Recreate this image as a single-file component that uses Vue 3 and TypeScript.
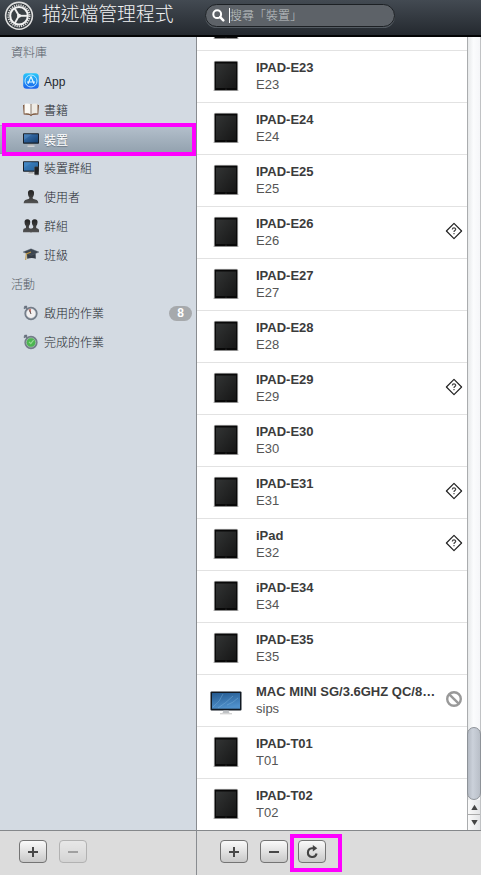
<script setup lang="ts">
interface NavItem {
  label: string
  icon: string
  latin?: boolean
  active?: boolean
  count?: number
}
interface Device {
  name: string
  detail: string
  kind?: 'mac'
  status?: 'unknown' | 'blocked'
}

const sections: { title: string; items: NavItem[] }[] = [
  {
    title: '資料庫',
    items: [
      { label: 'App', icon: 'app', latin: true },
      { label: '書籍', icon: 'book' },
      { label: '裝置', icon: 'device', active: true },
      { label: '裝置群組', icon: 'devices' },
      { label: '使用者', icon: 'user' },
      { label: '群組', icon: 'group' },
      { label: '班級', icon: 'class' },
    ],
  },
  {
    title: '活動',
    items: [
      { label: '啟用的作業', icon: 'active', count: 8 },
      { label: '完成的作業', icon: 'done' },
    ],
  },
]

const devices: Device[] = [
  { name: '', detail: '' },
  { name: 'IPAD-E23', detail: 'E23' },
  { name: 'IPAD-E24', detail: 'E24' },
  { name: 'IPAD-E25', detail: 'E25' },
  { name: 'IPAD-E26', detail: 'E26', status: 'unknown' },
  { name: 'IPAD-E27', detail: 'E27' },
  { name: 'IPAD-E28', detail: 'E28' },
  { name: 'IPAD-E29', detail: 'E29', status: 'unknown' },
  { name: 'IPAD-E30', detail: 'E30' },
  { name: 'IPAD-E31', detail: 'E31', status: 'unknown' },
  { name: 'iPad', detail: 'E32', status: 'unknown' },
  { name: 'iPAD-E34', detail: 'E34' },
  { name: 'IPAD-E35', detail: 'E35' },
  { name: 'MAC MINI SG/3.6GHZ QC/8…', detail: 'sips', kind: 'mac', status: 'blocked' },
  { name: 'IPAD-T01', detail: 'T01' },
  { name: 'IPAD-T02', detail: 'T02' },
]

const spokes = [60, 180, 300]
</script>

<template>
  <div class="window">
    <svg class="defs" width="0" height="0" aria-hidden="true">
      <defs>
        <linearGradient id="blue" x1="0" y1="0" x2="0" y2="1">
          <stop offset="0" stop-color="#28c8fa" /><stop offset="1" stop-color="#1a62ee" />
        </linearGradient>
        <linearGradient id="screen" x1="0" y1="0" x2="0.3" y2="1">
          <stop offset="0" stop-color="#23598f" /><stop offset="1" stop-color="#4f90cb" />
        </linearGradient>
        <linearGradient id="screen-dark" x1="0" y1="0" x2="1" y2="1">
          <stop offset="0" stop-color="#3f79b8" /><stop offset="1" stop-color="#153f70" />
        </linearGradient>
        <linearGradient id="glass" x1="0" y1="0" x2="1" y2="1">
          <stop offset="0" stop-color="#323434" /><stop offset="0.5" stop-color="#242525" /><stop offset="1" stop-color="#161616" />
        </linearGradient>
        <linearGradient id="person" x1="0" y1="0" x2="0" y2="1">
          <stop offset="0" stop-color="#222" /><stop offset="1" stop-color="#535353" />
        </linearGradient>
      </defs>
    </svg>

    <header class="topbar">
      <svg class="logo" width="30" height="32" viewBox="0 0 30 32">
        <circle cx="15" cy="15.8" r="13.4" fill="#30363b" stroke="#dedede" stroke-width="1.6" />
        <circle cx="15" cy="15.8" r="10.6" fill="none" stroke="#d8d8d8" stroke-width="2" stroke-dasharray="1.3 0.92" />
        <circle cx="15" cy="15.8" r="8.8" fill="#3a4045" stroke="#f2f2f2" stroke-width="2" />
        <g stroke="#eee" stroke-width="1.9">
          <line v-for="a in spokes" :key="a" x1="15" y1="15.8" x2="6.5" y2="15.8" :transform="`rotate(${a} 15 15.8)`" />
        </g>
        <circle cx="15" cy="15.8" r="2" fill="#f2f2f2" />
      </svg>
      <h1>描述檔管理程式</h1>
      <div class="search">
        <svg width="13" height="13" viewBox="0 0 13 13">
          <circle cx="5.2" cy="5.2" r="3.9" fill="none" stroke="#fff" stroke-width="2" />
          <path d="M8.2 8.2L11.3 11.3" stroke="#fff" stroke-width="2.5" stroke-linecap="round" />
        </svg>
        <i class="caret"></i>
        <span>搜尋「裝置」</span>
      </div>
    </header>

    <div class="body">
      <aside class="sidebar">
        <nav>
          <template v-for="section in sections" :key="section.title">
            <h2>{{ section.title }}</h2>
            <div v-for="item in section.items" :key="item.label" class="nav-item" :class="{ active: item.active }">
              <svg width="16" height="16" viewBox="0 0 16 16">
                <template v-if="item.icon === 'app'">
                  <rect x="0.2" y="0.2" width="15.6" height="15.6" rx="3.6" fill="url(#blue)" />
                  <circle cx="8" cy="8" r="6" fill="none" stroke="#b8e5ff" stroke-width="1" />
                  <path d="M8 3.6L5 10.8M8 3.6L11 10.8M4 9H12" fill="none" stroke="#e4f6ff" stroke-width="1.2" />
                </template>
                <template v-else-if="item.icon === 'book'">
                  <path d="M0 3H1.5V2H14.5V3H16L15.3 12.6L9.5 13L8 14.2L6.5 13L.7 12.6Z" fill="#7d573d" />
                  <path d="M1.5 1.7Q5.5 .8 8 2.6V12.4Q5 10.7 1.5 11.5Z" fill="#fbf9f5" />
                  <path d="M14.5 1.7Q10.5 .8 8 2.6V12.4Q11 10.7 14.5 11.5Z" fill="#eeebe5" />
                  <path d="M8 2.5V12.4" stroke="#87786d" stroke-width="1" />
                </template>
                <template v-else-if="item.icon === 'device' || item.icon === 'devices'">
                  <rect x="0" y="1.3" width="16" height="10.5" rx="0.8" fill="#18202a" />
                  <rect x="1" y="2.3" width="14" height="8.2" fill="url(#screen-dark)" />
                  <path d="M1 2.3H9L1 8Z" fill="#659ccb" opacity="0.35" />
                  <path d="M6 12H10L11 13.7H5Z" fill="#aaa" />
                  <path d="M4.5 14.2H11.5" stroke="#e5e5e5" stroke-width="1" />
                  <g v-if="item.icon === 'devices'">
                    <path d="M1 2.3H15V10.5H1Z" fill="#3e91d3" opacity="0.45" />
                    <rect x="11.5" y="6.8" width="4.3" height="8" rx="0.7" fill="#202225" stroke="#555" stroke-width="0.5" />
                  </g>
                </template>
                <template v-else-if="item.icon === 'user'">
                  <path d="M8 1C5.5 1 4.7 2.6 5 4.8C5.1 6.5 5.6 7.7 6.4 8.5L6.1 9.8L2.2 11Q.8 11.7 .6 14.2H15.4Q15.2 11.7 13.8 11L9.9 9.8L9.6 8.5C10.4 7.6 10.9 6.4 11 4.8C11.3 2.6 10.5 1 8 1Z" fill="url(#person)" />
                </template>
                <template v-else-if="item.icon === 'group'">
                  <path d="M11.7 1.3C9.4 1.3 8.6 2.8 8.9 4.7C9 6.3 9.6 7.2 10.3 8L10 10L7 11V14.2H16V11.7Q15.5 10.5 13.2 10V8Q14.3 7 14.5 4.7C14.8 2.8 14 1.3 11.7 1.3Z" fill="url(#person)" />
                  <path d="M4.4 1.3C2.1 1.3 1.3 2.8 1.6 4.7C1.7 6.4 2.3 7.3 3 8L2.9 10L.7 10.8Q0 11.5 0 14.2H9Q8.8 11.4 7.8 10.8L5.9 10V8Q7 7 7.2 4.7C7.5 2.8 6.7 1.3 4.4 1.3Z" fill="url(#person)" />
                </template>
                <template v-else-if="item.icon === 'class'">
                  <path d="M4 6L12.6 6L12.8 11.8Q9 10 4.2 11.8Z" fill="#353c46" />
                  <path d="M0 5.1L8 1.8L16 5.1L8.3 8.3Z" fill="#3d4651" stroke="#626c77" stroke-width="0.4" />
                  <path d="M8 5L3.3 7L2.7 13" fill="none" stroke="#bd9643" stroke-width="1.1" />
                </template>
                <template v-else>
                  <path d="M1.5 1.2L4.5 3.8M1 3.6L3.8 1" stroke="#68717e" stroke-width="1.7" />
                  <circle cx="8" cy="8.5" r="5.7" :fill="item.icon === 'done' ? '#4cb550' : '#f2f0f0'" stroke="#737c88" stroke-width="1.9" />
                  <circle cx="8" cy="8.5" r="4.7" fill="none" stroke="#c8ced5" stroke-width="0.5" />
                  <path v-if="item.icon === 'done'" d="M6 7.8L7.8 9.6L10.6 6" fill="none" stroke="#96dd92" stroke-width="1.2" />
                  <template v-else>
                    <path d="M8 8.5L5.3 4.5Q6.5 3.6 8 3.7Z" fill="#c87e76" />
                    <path d="M8 9L6.5 5.5" stroke="#634f4d" stroke-width="1" />
                  </template>
                </template>
              </svg>
              <span class="label" :class="{ latin: item.latin }">{{ item.label }}</span>
              <b v-if="item.count" class="badge">{{ item.count }}</b>
            </div>
          </template>
          <div class="nav-mark"></div>
        </nav>
        <footer class="toolbar">
          <button aria-label="+"><svg width="12" height="12" viewBox="0 0 12 12"><path d="M6 1V11M1 6H11" stroke="#484848" stroke-width="2" /></svg></button>
          <button disabled aria-label="−"><svg width="12" height="12" viewBox="0 0 12 12"><path d="M1 6H11" stroke="#484848" stroke-width="2" /></svg></button>
        </footer>
      </aside>

      <main class="panel">
        <div class="scroll-area">
          <div class="list">
            <div v-for="(device, i) in devices" :key="i" class="row">
              <div class="thumb">
                <svg v-if="device.kind === 'mac'" class="mac" width="32" height="26" viewBox="0 0 32 26">
                  <rect x="0.5" y="0.5" width="31" height="19" rx="1" fill="#111922" />
                  <rect x="2" y="2" width="28" height="15.7" fill="url(#screen)" />
                  <path d="M3 16Q10 11 13 3M8 17Q16 12 23 5M17 14Q23 12 28 7" fill="none" stroke="#8fc0e5" stroke-width="0.8" opacity="0.45" />
                  <path d="M13.5 19.5H18.5L19.5 22H12.5Z" fill="#bfc2c5" />
                  <path d="M10 22.7H22" stroke="#d2d2d2" stroke-width="1.3" />
                </svg>
                <svg v-else width="26" height="32" viewBox="0 0 26 32">
                  <path d="M0.5 30.3H25.5" stroke="#aaa" stroke-width="1" />
                  <rect x="1.3" y="1.3" width="23.4" height="29.2" rx="1.3" fill="#090909" stroke="#aaa" stroke-width="0.6" />
                  <rect x="3" y="3.5" width="20" height="24.5" fill="url(#glass)" />
                  <circle cx="13" cy="29.2" r="0.6" fill="#333" />
                </svg>
              </div>
              <div class="text">
                <strong>{{ device.name }}</strong>
                <span>{{ device.detail }}</span>
              </div>
              <div class="status">
                <svg v-if="device.status === 'unknown'" width="18" height="18" viewBox="0 0 18 18">
                  <path d="M9 1.4L16.6 9L9 16.6L1.4 9Z" fill="#fff" stroke="#222" stroke-width="1.2" stroke-linejoin="round" />
                  <path d="M7.3 7.4C7.3 5.5 10.7 5.5 10.7 7.3C10.7 8.6 9 8.5 9 9.9M9 11V12.2" fill="none" stroke="#444" stroke-width="1.2" />
                </svg>
                <svg v-else-if="device.status === 'blocked'" width="18" height="18" viewBox="0 0 18 18">
                  <circle cx="9" cy="9" r="6.8" fill="none" stroke="#999" stroke-width="2.4" />
                  <path d="M4.3 4.3L13.7 13.7" stroke="#999" stroke-width="2.4" />
                </svg>
              </div>
            </div>
          </div>
          <div class="scrollbar">
            <div class="thumb-bar"></div>
            <div class="arrow"><svg width="7" height="7" viewBox="0 0 7 7"><path d="M3.5 0.8L6.7 6H0.3Z" fill="#444" /></svg></div>
            <div class="arrow"><svg width="7" height="7" viewBox="0 0 7 7"><path d="M3.5 6.2L6.7 1H0.3Z" fill="#444" /></svg></div>
          </div>
        </div>
        <footer class="toolbar">
          <button aria-label="+"><svg width="12" height="12" viewBox="0 0 12 12"><path d="M6 1V11M1 6H11" stroke="#484848" stroke-width="2" /></svg></button>
          <button aria-label="−"><svg width="12" height="12" viewBox="0 0 12 12"><path d="M1 6H11" stroke="#484848" stroke-width="2" /></svg></button>
          <button class="refresh" aria-label="↻">
            <svg width="14" height="14" viewBox="0 0 14 14">
              <path d="M8.5 3.2H7A4.4 4.4 0 1 0 11.6 8.6" fill="none" stroke="#444" stroke-width="2.1" />
              <path d="M7.8 0L12.3 3.3L7.8 6.4Z" fill="#444" />
            </svg>
            <i class="refresh-mark"></i>
          </button>
        </footer>
      </main>
    </div>
  </div>
</template>

<style>
body {
  margin: 0;
  overflow: hidden;
}
</style>

<style scoped>
* {
  box-sizing: border-box;
}
.window {
  display: flex;
  flex-direction: column;
  width: 481px;
  height: 875px;
  font-family: "Liberation Sans", "Noto Sans CJK TC", sans-serif;
  background: #fff;
}
.defs {
  position: absolute;
}
svg {
  display: block;
  flex: none;
}
.topbar {
  display: flex;
  align-items: flex-start;
  height: 37px;
  flex: none;
  padding-left: 4px;
  background: linear-gradient(#434a52, #24292f);
  border-bottom: 2px solid #030405;
}
h1 {
  width: 163px;
  margin: 0 0 0 8px;
  font-size: 18.8px;
  line-height: 30px;
  font-weight: 300;
  color: #f2f3f4;
  white-space: nowrap;
}
.search {
  display: flex;
  align-items: center;
  width: 190px;
  height: 23px;
  margin-top: 4px;
  padding-left: 6px;
  border: 1px solid #1c2024;
  border-radius: 12px;
  background: #5d6268;
  box-shadow: 0 1px 0 #535a61;
  font-size: 12px;
  font-weight: 300;
  color: #bfc2c5;
}
.caret {
  width: 1px;
  height: 15px;
  margin-left: 4px;
  background: #fff;
}
.search span {
  line-height: 20px;
  white-space: nowrap;
}
.body {
  display: flex;
  flex: 1;
  min-height: 0;
}
.sidebar {
  display: flex;
  flex-direction: column;
  width: 197px;
  flex: none;
  border-right: 1px solid #898c90;
}
nav {
  position: relative;
  flex: 1;
  padding-top: 1px;
  background: #d3dae2;
}
h2 {
  height: 29px;
  margin: 0;
  padding-left: 11px;
  font-size: 12px;
  line-height: 30px;
  font-weight: 300;
  color: #555c66;
}
.nav-item {
  display: flex;
  align-items: center;
  height: 29px;
  padding: 0 4px 1px 23px;
  font-size: 12px;
  color: #24282e;
}
.label {
  flex: 1;
  margin-left: 5px;
  padding-top: 2px;
  font-weight: 300;
  line-height: 28px;
}
.label.latin {
  padding-top: 1px;
}
.nav-item.active {
  padding-bottom: 0;
  color: #fff;
  background: linear-gradient(#b4c0cc, #92a1ae);
  border-top: 1px solid #a0abb7;
  border-bottom: 1px solid #8695a2;
}
.active .label {
  font-weight: 400;
  text-shadow: 0 1px 1px #68737e;
}
.badge {
  width: 23px;
  height: 15px;
  border-radius: 8px;
  background: #a6a9ac;
  color: #fff;
  font-size: 12px;
  line-height: 14px;
  text-align: center;
}
.nav-mark {
  position: absolute;
  left: 2px;
  top: 86px;
  width: 194px;
  height: 33px;
  border: 4px solid #f0f;
}
.toolbar {
  display: flex;
  gap: 12px;
  height: 45px;
  flex: none;
  padding: 9px 0 0 19px;
  border-top: 1px solid #85888b;
  background: #dcdcdc;
}
button {
  position: relative;
  display: flex;
  align-items: center;
  justify-content: center;
  width: 28px;
  height: 23px;
  padding: 0;
  border: 1px solid #747474;
  border-radius: 4px;
  background: linear-gradient(#fafafa, #c9c9c9);
}
button:disabled {
  opacity: 0.4;
}
.panel {
  display: flex;
  flex-direction: column;
  flex: 1;
  min-width: 0;
}
.panel .toolbar {
  padding-left: 23px;
}
.refresh {
  margin-left: -2px;
}
.refresh-mark {
  position: absolute;
  left: -9px;
  top: -7px;
  width: 52px;
  height: 38px;
  border: 4px solid #f0f;
}
.scroll-area {
  display: flex;
  flex: 1;
  min-height: 0;
}
.list {
  display: flex;
  flex-direction: column;
  justify-content: flex-end;
  width: 270px;
  overflow: hidden;
}
.row {
  display: flex;
  height: 52px;
  flex: none;
  border-bottom: 1px solid #e2e2e2;
}
.row:last-child {
  border-bottom: 0;
  height: 51px;
}
.thumb {
  display: flex;
  align-items: center;
  justify-content: center;
  width: 58px;
  height: 50px;
}
.mac {
  margin-top: 8px;
}
.text {
  display: flex;
  flex-direction: column;
  width: 182px;
  margin-left: 1px;
  padding-top: 8px;
  font-size: 13px;
  line-height: 17px;
}
.text strong {
  white-space: nowrap;
  color: #3b3b3b;
}
.text span {
  color: #555;
}
.status {
  display: flex;
  align-items: center;
  height: 48px;
  margin-left: 7px;
}
.scrollbar {
  display: flex;
  flex-direction: column;
  justify-content: flex-end;
  width: 14px;
  border-left: 1px solid #aaacae;
  border-right: 1px solid #c0c2c4;
  background: linear-gradient(90deg, #e7e9ea, #fbfcfd 45%, #f5f6f8);
}
.thumb-bar {
  height: 73px;
  margin: 0 -1px;
  border: 1px solid #8d9298;
  border-radius: 7px;
  background: linear-gradient(90deg, #b4bac3, #cbd1da 40%, #b9bfc8);
}
.arrow {
  display: flex;
  align-items: center;
  justify-content: center;
  height: 14px;
  background: linear-gradient(90deg, #fafafa, #e3e4e6);
}
.arrow + .arrow {
  height: 16px;
  border-top: 1px solid #aaa;
}
</style>
